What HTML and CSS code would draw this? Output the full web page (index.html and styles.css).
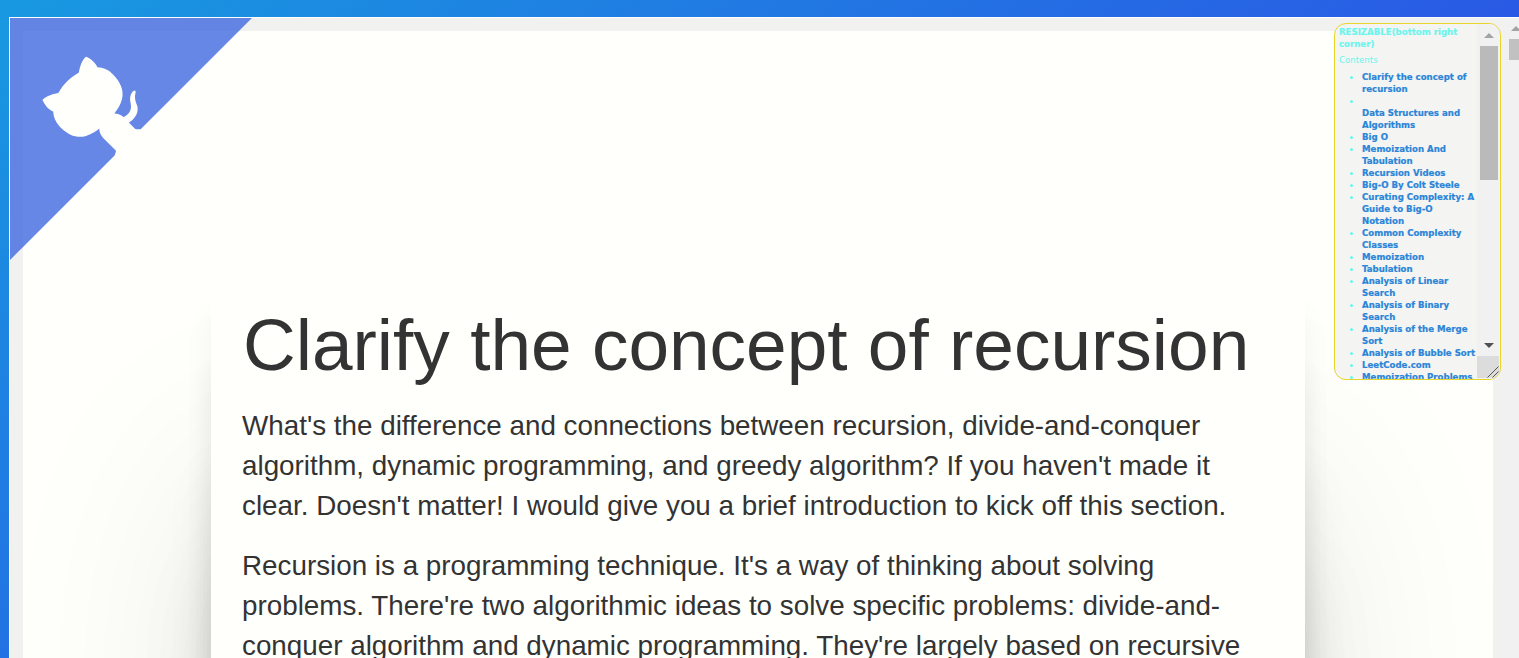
FILE: index.html
```html
<!DOCTYPE html>
<html lang="en">
<head>
    <meta charset="UTF-8">
    <meta name="viewport" content="width=device-width, initial-scale=1.0">
    <title>Clarify the concept of recursion</title>
    <link rel="stylesheet" href="styles.css">
</head>
<body>
    <div class="page">
        <div class="sheet">
            <article class="post">
                <h1>Clarify the concept of recursion</h1>
                <p>What's the difference and connections between recursion, divide-and-conquer algorithm, dynamic programming, and greedy algorithm? If you haven't made it clear. Doesn't matter! I would give you a brief introduction to kick off this section.</p>
                <p>Recursion is a programming technique. It's a way of thinking about solving problems. There're two algorithmic ideas to solve specific problems: divide-and-conquer algorithm and dynamic programming. They're largely based on recursive</p>
            </article>
        </div>
        <div class="page-bar">
            <div class="page-bar-btn"><span class="arrow-up"></span></div>
            <div class="page-bar-thumb"></div>
        </div>
    </div>

    <a class="corner" href="#" aria-label="View source on GitHub">
        <svg viewBox="0 0 250 250" width="242" height="242" aria-hidden="true">
            <path class="corner-bg" d="M0,0 L115,115 L130,115 L142,142 L250,250 L250,0 Z"/>
            <path class="corner-cat" d="M128.3,109.0 C113.8,99.7 119.0,89.6 119.0,89.6 C122.0,82.7 120.5,78.6 120.5,78.6 C119.2,72.0 123.4,76.3 123.4,76.3 C127.3,80.9 125.5,87.3 125.5,87.3 C122.9,97.6 130.6,101.9 134.4,103.2"/>
            <path class="corner-cat" d="M115.0,115.0 C114.9,115.1 118.7,116.5 119.8,115.4 L133.7,101.6 C136.9,99.2 139.9,98.4 142.2,98.6 C133.8,88.0 127.5,74.4 143.8,58.0 C148.5,53.4 154.0,51.2 159.7,51.0 C160.3,49.4 163.2,43.6 171.4,40.1 C171.4,40.1 176.1,42.5 178.8,56.2 C183.1,58.6 187.2,61.8 190.9,65.4 C194.5,69.0 197.7,73.2 200.1,77.6 C213.8,80.2 216.3,84.9 216.3,84.9 C212.7,93.1 206.9,96.0 205.4,96.6 C205.1,102.4 203.0,107.8 198.3,112.5 C181.9,128.9 168.3,122.5 157.7,114.1 C157.9,116.9 156.7,120.9 152.7,124.9 L141.0,136.5 C139.8,137.7 141.6,141.9 141.8,141.8 Z"/>
        </svg>
    </a>

    <nav class="toc">
        <div class="toc-body">
            <div class="toc-note">RESIZABLE(bottom right corner)</div>
            <div class="toc-title">Contents</div>
            <ul class="toc-list">
                <li><a href="#">Clarify the concept of recursion</a></li>
                <li><br><a href="#">Data Structures and Algorithms</a></li>
                <li><a href="#">Big O</a></li>
                <li><a href="#">Memoization And Tabulation</a></li>
                <li><a href="#">Recursion Videos</a></li>
                <li><a href="#">Big-O By Colt Steele</a></li>
                <li><a href="#">Curating Complexity: A Guide to Big-O Notation</a></li>
                <li><a href="#">Common Complexity Classes</a></li>
                <li><a href="#">Memoization</a></li>
                <li><a href="#">Tabulation</a></li>
                <li><a href="#">Analysis of Linear Search</a></li>
                <li><a href="#">Analysis of Binary Search</a></li>
                <li><a href="#">Analysis of the Merge Sort</a></li>
                <li><a href="#">Analysis of Bubble Sort</a></li>
                <li><a href="#">LeetCode.com</a></li>
                <li><a href="#">Memoization Problems</a></li>
            </ul>
        </div>
        <div class="toc-bar">
            <div class="toc-bar-btn"><span class="arrow-up"></span></div>
            <div class="toc-bar-track"><div class="toc-bar-thumb"></div></div>
            <div class="toc-bar-btn"><span class="arrow-down"></span></div>
            <div class="toc-grip">
                <svg width="22" height="22" viewBox="0 0 22 22" aria-hidden="true">
                    <path d="M10.5 21.5L21.5 10.5M15.5 21.5L21.5 15.5" stroke="#555" fill="none"/>
                </svg>
            </div>
        </div>
    </nav>
</body>
</html>
```

FILE: styles.css
```css
html, body {
    height: 100%;
}

body {
    margin: 0;
    padding: 17px 0 0 9px;
    box-sizing: border-box;
    overflow: hidden;
    background: linear-gradient(145deg, #1899e0, #3433e8);
    font-family: "Liberation Sans", Arial, sans-serif;
    color: #333;
}

.page {
    display: flex;
    width: 1515px;
    height: 641px;
    box-sizing: border-box;
    border-top: 1px solid #fff;
    border-left: 1px solid #fff;
    background: #f1f1f0;
    overflow: hidden;
}

.sheet {
    flex: 1;
    margin: 13px 14px 0 13px;
    padding-top: 244px;
    background: #fffffc;
}

.post {
    width: 1094px;
    min-height: 1000px;
    box-sizing: border-box;
    margin: 0 auto;
    padding: 1px 31px 40px;
    border-radius: 4px;
    background: #fffffc;
    box-shadow:
        0 40px 30px rgba(0, 0, 0, 0.05),
        0 100px 30px rgba(0, 0, 0, 0.06),
        0 200px 50px rgba(0, 0, 0, 0.07),
        0 300px 80px rgba(0, 0, 0, 0.08),
        0 200px 220px rgba(0, 0, 0, 0.1);
}

.post h1 {
    margin: 29px 0 21px 1px;
    font-size: 73px;
    font-weight: 400;
    line-height: 80px;
}

.post p {
    margin: 0 0 20px;
    font-size: 27.8px;
    line-height: 40px;
}

.page-bar {
    flex: none;
    width: 17px;
    background: #f1f1f1;
}

.page-bar-btn {
    display: flex;
    justify-content: center;
    height: 21px;
    padding-top: 8px;
    box-sizing: border-box;
}

.page-bar-thumb {
    height: 21px;
    margin-left: 2px;
    background: #c1c1c1;
}

.arrow-up {
    width: 0;
    height: 0;
    border: 5px solid transparent;
    border-top: 0;
    border-bottom-color: #a3a3a3;
}

.arrow-down {
    width: 0;
    height: 0;
    border: 5px solid transparent;
    border-bottom: 0;
    border-top-color: #505050;
}

.corner {
    position: absolute;
    top: 18px;
    left: 10px;
    display: block;
    width: 242px;
    height: 242px;
}

.corner svg {
    display: block;
    transform: scaleX(-1);
}

.corner-bg {
    fill: #4169e1;
    fill-opacity: 0.8;
}

.corner-cat {
    fill: #fffffc;
}

.toc {
    position: absolute;
    top: 23px;
    left: 1334px;
    display: flex;
    width: 167px;
    height: 357px;
    box-sizing: border-box;
    border: 1px solid #e8d52a;
    border-radius: 12px;
    background: #f4f4f2;
    color: #6cf5ee;
    font-family: "DejaVu Sans", Verdana, sans-serif;
    font-size: 8.6px;
    line-height: 12px;
    overflow: hidden;
}

.toc-body {
    flex: 1;
    min-width: 0;
    padding: 2px 1px 0 4px;
    overflow: hidden;
}

.toc-note {
    font-weight: 700;
    -webkit-text-stroke: 0.2px #6cf5ee;
}

.toc-title {
    margin-top: 4px;
}

.toc-list {
    margin: 5px 0 0;
    padding: 0 0 0 23px;
}

.toc-list a {
    color: #2a85d8;
    font-weight: 700;
    text-decoration: none;
    -webkit-text-stroke: 0.2px #2a85d8;
}

.toc-bar {
    display: flex;
    flex: none;
    flex-direction: column;
    width: 22px;
    padding-bottom: 1px;
    margin-right: 1px;
    background: #f1f1f1;
}

.toc-bar-btn {
    display: flex;
    flex: none;
    align-items: center;
    justify-content: center;
    height: 22px;
    padding-left: 2px;
    box-sizing: border-box;
}

.toc-bar-track {
    flex: 1;
    padding: 0 1px 0 3px;
}

.toc-bar-thumb {
    height: 134px;
    background: #bababa;
}

.toc-grip {
    flex: none;
    height: 22px;
    background: #dcdcdc;
}

.toc-grip svg {
    display: block;
}
```
